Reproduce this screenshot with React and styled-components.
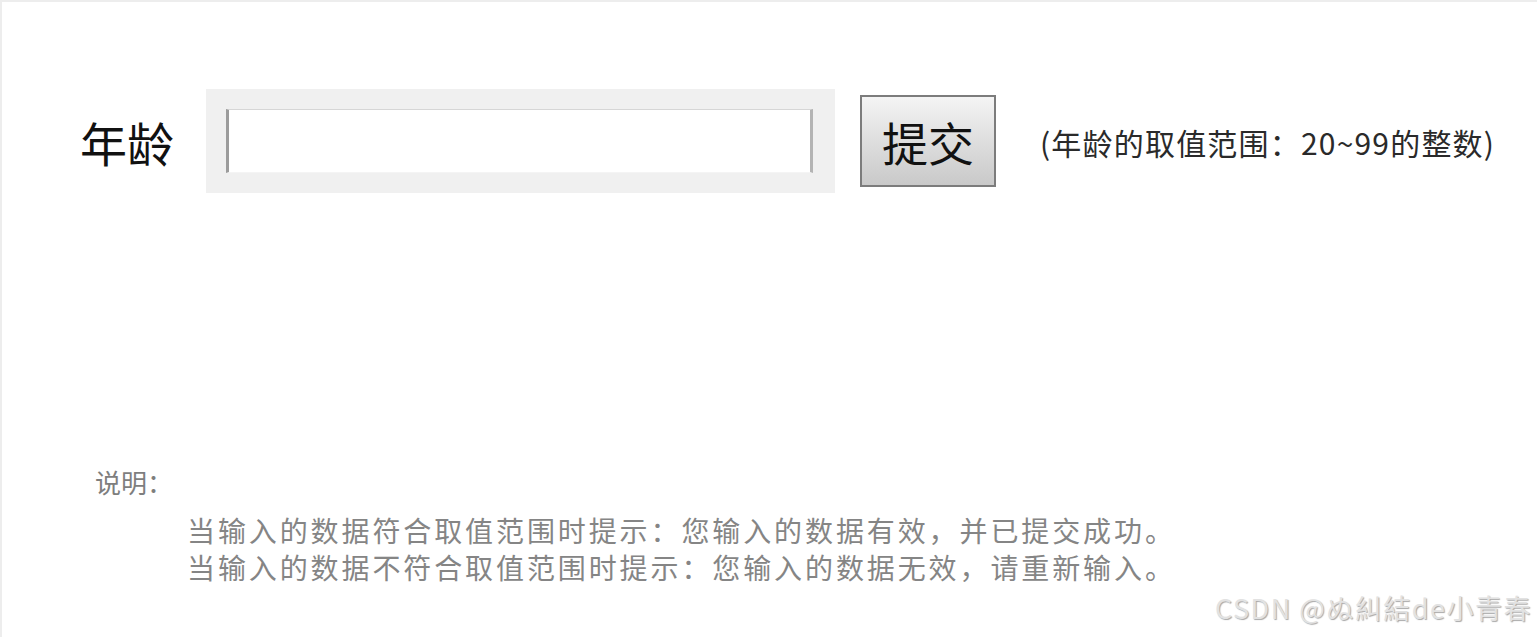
import React from 'react'
import styled, { createGlobalStyle } from 'styled-components'

const GlobalStyle = createGlobalStyle`
    html, body {
        margin: 0;
        padding: 0;
        background: #ffffff;
    }
    body {
        font-family: "Noto Sans CJK SC", "Noto Sans", sans-serif;
        color: #1a1a1a;
    }
`

const Page = styled.div`
    position: relative;
    box-sizing: border-box;
    height: 637px;
    border-top: 2px solid #ededed;
    border-left: 2px solid #ededed;
    overflow: hidden;
`

const FormRow = styled.div`
    display: flex;
    align-items: center;
    padding: 87px 0 0 78px;
`

const Label = styled.label`
    font-size: 47px;
    line-height: 1;
    margin-right: 32px;
    color: #111;
`

const FieldBox = styled.div`
    display: flex;
    align-items: center;
    box-sizing: border-box;
    width: 629px;
    height: 104px;
    padding: 0 22px 0 20px;
    background: #f0f0f0;
`

const Input = styled.input`
    box-sizing: border-box;
    width: 100%;
    height: 64px;
    background: #fff;
    border-top: 1px solid #d6d6d6;
    border-left: 3px solid #9c9c9c;
    border-right: 3px solid #b4b4b4;
    border-bottom: 1px solid #f4f4f4;
    outline: none;
    font-size: 28px;
    font-family: inherit;
`

const SubmitButton = styled.button`
    box-sizing: border-box;
    width: 136px;
    height: 92px;
    margin-left: 25px;
    padding: 0;
    border: 2px solid #7c7c7c;
    background: linear-gradient(to bottom, #f4f4f4, #c9c9c9);
    font-family: inherit;
    font-size: 46px;
    line-height: 1;
    color: #111;
`

const Hint = styled.span`
    margin-left: 44px;
    margin-top: 2px;
    font-size: 30px;
    letter-spacing: 1.2px;
    color: #2a2a2a;
    white-space: nowrap;
`

const Notes = styled.div`
    padding: 271px 0 0 93px;
    color: #7e7e7e;
`

const NotesTitle = styled.div`
    font-size: 26px;
    line-height: 36px;
`

const NotesList = styled.div`
    padding: 12px 0 0 92px;
    color: #858585;
`

const NoteLine = styled.p`
    margin: 0;
    font-size: 28px;
    letter-spacing: 2.9px;
    line-height: 37px;
`

const Watermark = styled.div`
    position: absolute;
    right: 5px;
    bottom: 10px;
    font-size: 27px;
    letter-spacing: 1.5px;
    color: #e2e2e2;
    text-shadow: 1px 1px 1px #a8a8a8;
    white-space: nowrap;
`

const App = () => {
    return (
        <Page>
            <GlobalStyle />
            <FormRow>
                <Label htmlFor="age">年龄</Label>
                <FieldBox>
                    <Input id="age" type="text" />
                </FieldBox>
                <SubmitButton>提交</SubmitButton>
                <Hint>(年龄的取值范围：20~99的整数)</Hint>
            </FormRow>
            <Notes>
                <NotesTitle>说明：</NotesTitle>
                <NotesList>
                    <NoteLine>当输入的数据符合取值范围时提示：您输入的数据有效，并已提交成功。</NoteLine>
                    <NoteLine>当输入的数据不符合取值范围时提示：您输入的数据无效，请重新输入。</NoteLine>
                </NotesList>
            </Notes>
            <Watermark>CSDN @ぬ糾結de小青春</Watermark>
        </Page>
    )
}

export default App
